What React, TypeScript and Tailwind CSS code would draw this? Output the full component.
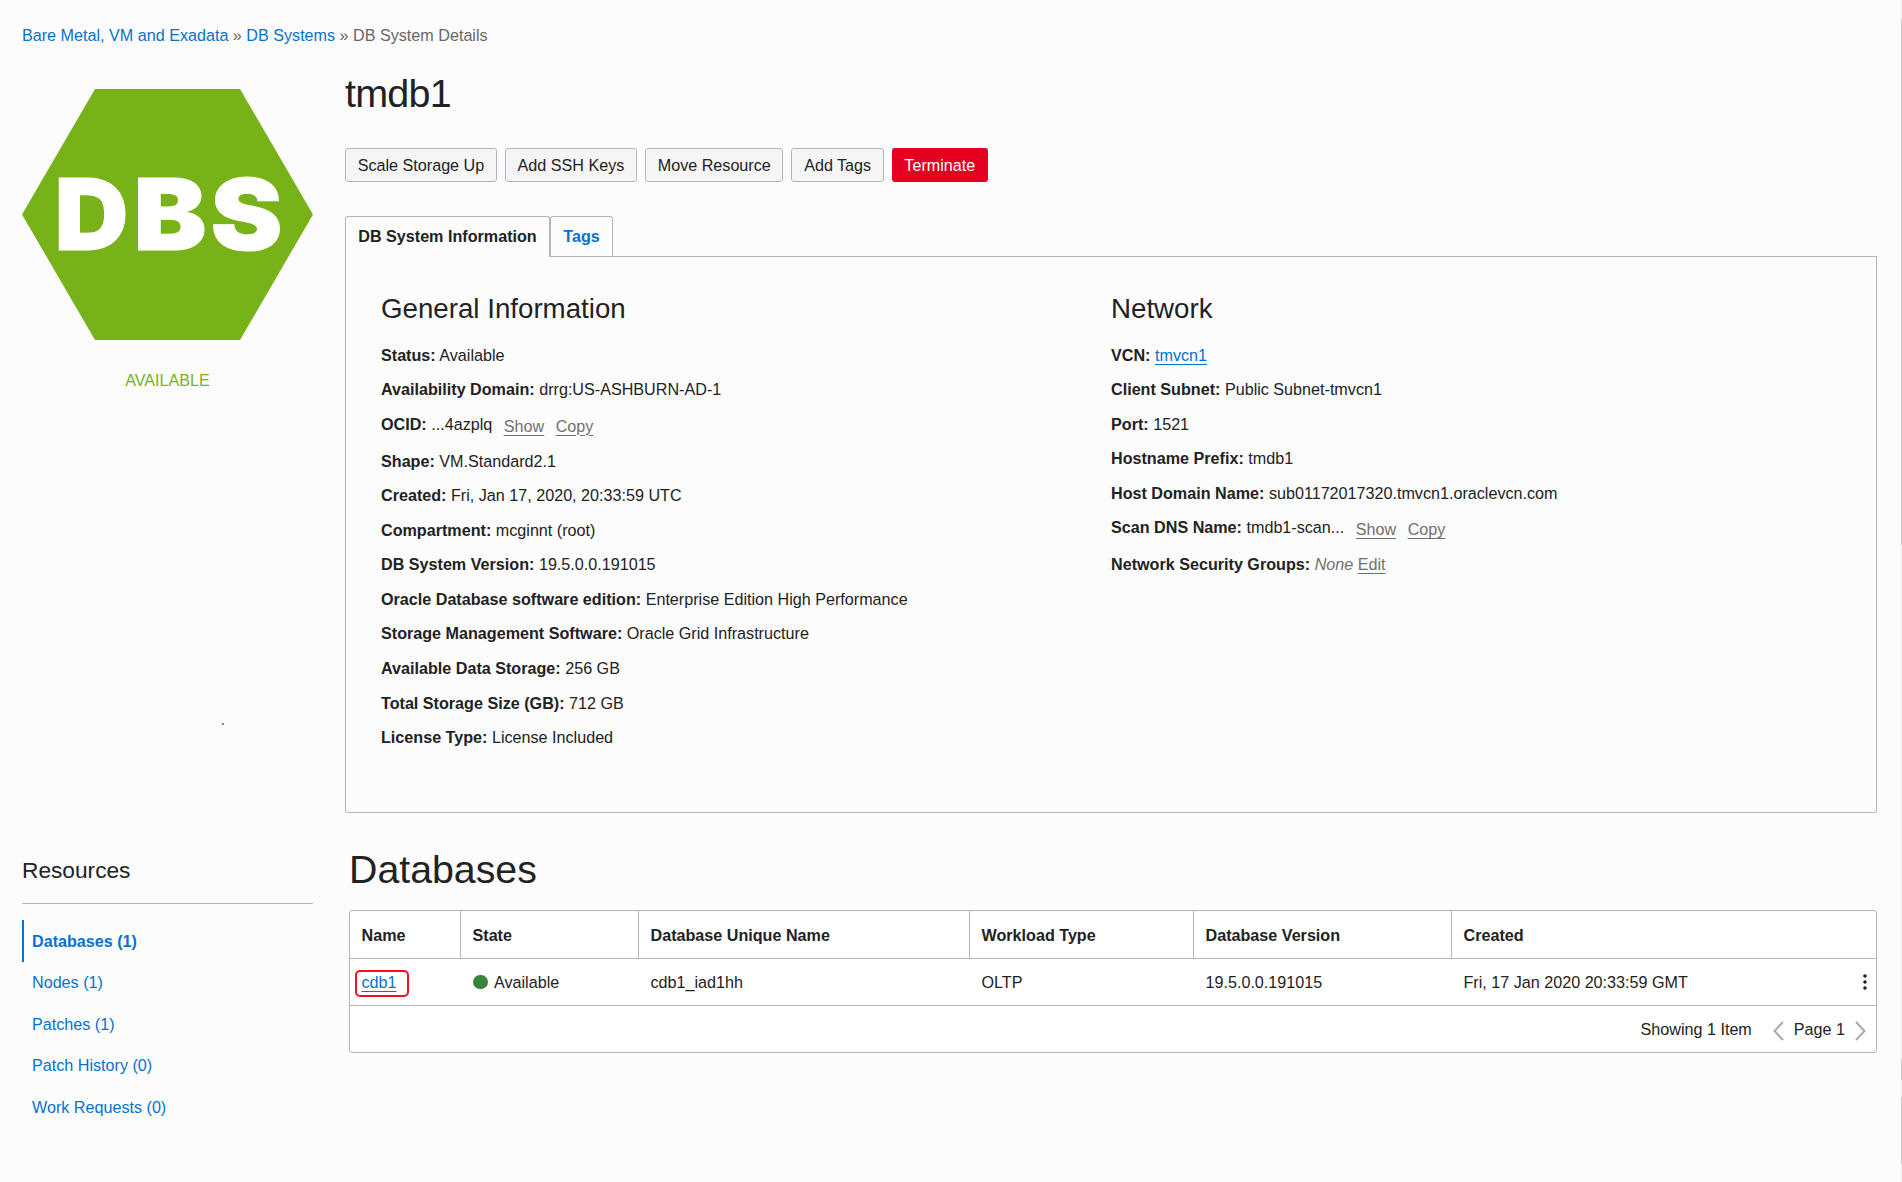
import React from "react";

const linkGray = "text-[#707070] underline underline-offset-[3px]";

function Row({ label, children, tall = false }: { label: string; children: React.ReactNode; tall?: boolean }) {
  return (
    <div className={tall ? "h-[36.88px] whitespace-nowrap" : "h-[34.56px] whitespace-nowrap"}>
      <b>{label}:</b> {children}
    </div>
  );
}

function ShowCopy() {
  return (
    <span className="relative top-[2px] ml-[11.5px] inline-flex gap-[11.5px]">
      <a className={linkGray}>Show</a>
      <a className={linkGray}>Copy</a>
    </span>
  );
}

const general: [string, string][] = [
  ["Status", "Available"],
  ["Availability Domain", "drrg:US-ASHBURN-AD-1"],
  ["OCID", "...4azplq"],
  ["Shape", "VM.Standard2.1"],
  ["Created", "Fri, Jan 17, 2020, 20:33:59 UTC"],
  ["Compartment", "mcginnt (root)"],
  ["DB System Version", "19.5.0.0.191015"],
  ["Oracle Database software edition", "Enterprise Edition High Performance"],
  ["Storage Management Software", "Oracle Grid Infrastructure"],
  ["Available Data Storage", "256 GB"],
  ["Total Storage Size (GB)", "712 GB"],
  ["License Type", "License Included"],
];

const resources = ["Nodes (1)", "Patches (1)", "Patch History (0)", "Work Requests (0)"];
const headers = ["Name", "State", "Database Unique Name", "Workload Type", "Database Version", "Created"];
const cols = "grid grid-cols-[111px_178px_331px_224px_258px_1fr]";

function Hexagon() {
  return (
    <svg width="291" height="251" viewBox="0 0 291 251" className="block">
      <polygon points="73,0 218,0 291,125.5 218,251 73,251 0,125.5" fill="#77b318" />
      <g fill="#fff" stroke="#fff" strokeWidth="1" fontFamily="Inter, 'Liberation Sans', sans-serif" fontWeight="900" fontSize="99.5">
        <text x="32.5" y="160.5" textLength="74" lengthAdjust="spacingAndGlyphs">D</text>
        <text x="111.5" y="160.5" textLength="73" lengthAdjust="spacingAndGlyphs">B</text>
        <text x="188.5" y="160.5" textLength="72" lengthAdjust="spacingAndGlyphs">S</text>
      </g>
    </svg>
  );
}

export default function App() {
  return (
    <div className="relative h-[1182px] w-[1902px] overflow-hidden bg-[#fcfcfc] px-[22px] pt-[23px] font-['Liberation_Sans',Arial,sans-serif] text-[16.15px] leading-6 text-[#222]">
      <nav className="h-6 text-[#666]">
        <a className="text-[#0572ce]">Bare Metal, VM and Exadata</a> » <a className="text-[#0572ce]">DB Systems</a> » DB System Details
      </nav>

      <div className="flex">
        <aside className="w-[323px] shrink-0">
          <div className="w-[291px] pt-[42px]">
            <Hexagon />
            <div className="mt-[28px] text-center text-[#77b318]">AVAILABLE</div>
            <h2 className="mt-[461px] h-[51px] border-b border-[#b1b7c1] text-[22.7px] leading-[34px]">Resources</h2>
            <ul className="mt-4 text-[#0572ce]">
              <li className="flex h-[42px] items-center border-l-2 border-[#0572ce] pl-2 font-bold">Databases (1)</li>
              {resources.map((r) => (
                <li key={r} className="flex h-[41.6px] items-center pb-px pl-[10px]">{r}</li>
              ))}
            </ul>
          </div>
        </aside>

        <main className="w-[1532px] shrink-0">
          <h1 className="mt-[22px] text-[39.5px] leading-[48px] tracking-[-0.02em]">tmdb1</h1>
          <div className="mt-[31px] flex gap-2">
            {["Scale Storage Up", "Add SSH Keys", "Move Resource", "Add Tags"].map((b) => (
              <button key={b} className="h-[34px] rounded-[3px] border border-[#b1b7c1] bg-[#f5f5f5] px-[11.7px] pb-px">{b}</button>
            ))}
            <button className="h-[34px] rounded-[3px] bg-[#e6001f] px-[12.5px] pb-px text-white">Terminate</button>
          </div>

          <div className="mt-[34px] flex h-[41px] font-bold">
            <div className="z-10 flex w-[205px] items-center justify-center rounded-t-[3px] border border-b-0 border-[#b1b7c1] bg-[#fcfcfc] pb-0.5">DB System Information</div>
            <div className="flex w-[63px] items-center justify-center rounded-t-[3px] border border-b-0 border-[#b1b7c1] pb-0.5 text-[#0572ce]">Tags</div>
          </div>
          <div className="-mt-px flex">
            <div className="h-px w-[204px]" />
            <div className="h-px flex-1 bg-[#b1b7c1]" />
          </div>
          <section className="grid h-[556px] grid-cols-[730px_1fr] rounded-b-[3px] border border-t-0 border-[#b1b7c1] pl-[35px] pt-[33px]">
            <div>
              <h2 className="h-[52.75px] text-[27.7px] leading-[38px]">General Information</h2>
              {general.map(([k, v]) => (
                <Row key={k} label={k} tall={k === "OCID"}>
                  {v}
                  {k === "OCID" && <ShowCopy />}
                </Row>
              ))}
            </div>
            <div>
              <h2 className="h-[52.75px] text-[27.7px] leading-[38px]">Network</h2>
              <Row label="VCN"><a className="text-[#0572ce] underline underline-offset-[3px]">tmvcn1</a></Row>
              <Row label="Client Subnet">Public Subnet-tmvcn1</Row>
              <Row label="Port">1521</Row>
              <Row label="Hostname Prefix">tmdb1</Row>
              <Row label="Host Domain Name">sub01172017320.tmvcn1.oraclevcn.com</Row>
              <Row label="Scan DNS Name" tall>tmdb1-scan...<ShowCopy /></Row>
              <Row label="Network Security Groups"><i className="text-[#707070]">None</i> <a className={linkGray}>Edit</a></Row>
            </div>
          </section>

          <div className="pl-1">
            <h2 className="mt-[32px] text-[39.3px] leading-[48px]">Databases</h2>
            <div className="mt-[17px] rounded-[3px] border border-[#b1b7c1] bg-white">
              <div className={`${cols} h-[48px] border-b border-[#b1b7c1] font-bold`}>
                {headers.map((h, i) => (
                  <div key={h} className={`flex items-center pl-[11.5px] ${i < 5 ? "border-r border-[#b1b7c1]" : ""}`}>{h}</div>
                ))}
              </div>
              <div className={`${cols} h-[47px] items-center border-b border-[#b1b7c1]`}>
                <div className="relative pl-[11.5px]">
                  <a className="text-[#0572ce] underline underline-offset-[3px]">cdb1</a>
                  <span className="absolute left-[5px] top-0 h-[27px] w-[54px] rounded-[5px] border-2 border-[#f5101c]" />
                </div>
                <div className="flex items-center pl-[12px]"><span className="mr-[6.5px] size-[14.5px] rounded-full bg-[#368538]" />Available</div>
                <div className="pl-[11.5px]">cdb1_iad1hh</div>
                <div className="pl-[11.5px]">OLTP</div>
                <div className="pl-[11.5px]">19.5.0.0.191015</div>
                <div className="flex items-center justify-between pl-[11.5px] pr-[9.5px]">
                  Fri, 17 Jan 2020 20:33:59 GMT
                  <svg width="4" height="16" viewBox="0 0 4 16" fill="#222"><circle cx="2" cy="2" r="1.8" /><circle cx="2" cy="8" r="1.8" /><circle cx="2" cy="14" r="1.8" /></svg>
                </div>
              </div>
              <div className="flex h-[46px] items-center justify-end pb-px pr-[10px]">
                Showing 1 Item
                <svg width="11" height="20" viewBox="0 0 11 20" fill="none" stroke="#aaa" strokeWidth="2" className="ml-[21px] mr-[10px] mt-[4px]"><path d="M10 1 1.5 10 10 19" /></svg>
                Page 1
                <svg width="11" height="20" viewBox="0 0 11 20" fill="none" stroke="#aaa" strokeWidth="2" className="ml-[10px] mt-[4px]"><path d="M1 1 9.5 10 1 19" /></svg>
              </div>
            </div>
          </div>
        </main>
      </div>

      <span className="absolute left-[222px] top-[723px] size-[2px] rounded-full bg-[#f0203a]" />

      {/* scroll track along the window edge */}
      <div className="absolute right-0 top-0 flex h-full w-px flex-col bg-[#f0f0f0]">
        <div className="mt-[19px] h-[526px] bg-[#cdcdcd]" />
        <div className="mt-[514px] h-[21px] bg-[#cdcdcd]" />
        <div className="mt-[17px] h-[67px] bg-[#cdcdcd]" />
      </div>
    </div>
  );
}
